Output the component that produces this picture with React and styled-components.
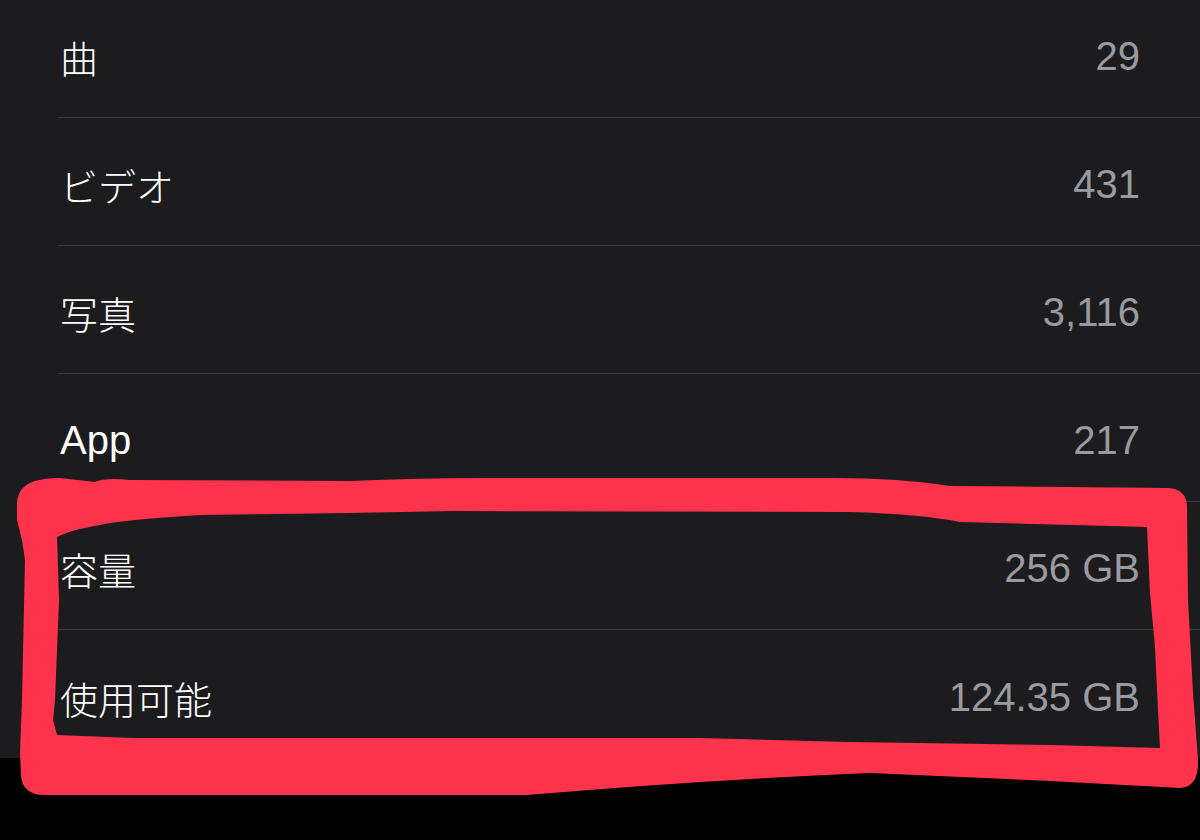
import React from "react";
import styled, { createGlobalStyle } from "styled-components";

/* iOS "About" style list with a hand-drawn red marker over the storage rows. */

const GlobalStyle = createGlobalStyle`
  html, body {
    margin: 0;
    padding: 0;
    background: #000;
  }
  body {
    font-family: "Liberation Sans", "Noto Sans CJK JP", sans-serif;
    -webkit-font-smoothing: antialiased;
  }
`;

const Page = styled.div`
  position: relative;
  width: 1200px;
  height: 840px;
  overflow: hidden;
  background: #000;
`;

const List = styled.div`
  margin-top: -10px;
  background: #1c1c1e;
`;

const Row = styled.div`
  box-sizing: border-box;
  height: 128px;
  margin-left: 58px;
  padding: 6px 60px 0 2px;
  display: flex;
  align-items: center;
  justify-content: space-between;
  border-bottom: ${({ $last }) => ($last ? "none" : "1px solid #38383a")};
`;

const Label = styled.span`
  font-family: ${({ $cjk }) =>
    $cjk ? '"Noto Sans CJK JP", sans-serif' : '"Liberation Sans", sans-serif'};
  font-size: ${({ $cjk }) => ($cjk ? "38px" : "40px")};
  font-weight: ${({ $cjk }) => ($cjk ? 300 : 400)};
  color: #ffffff;
`;

const Value = styled.span`
  font-size: 40px;
  color: #9a9aa0;
`;

const Marker = styled.svg`
  position: absolute;
  inset: 0;
  width: 1200px;
  height: 840px;
  pointer-events: none;
`;

const OUTER =
  "M17 520 L17 503 Q18 486 35 481 Q45 478 60 478 L95 482 Q105 477 130 480 L350 481 " +
  "Q420 478 483 478 L833 478 Q900 478 950 486 L1168 488 Q1186 489 1187 506 L1188 600 " +
  "L1193 693 L1198 760 Q1199 787 1180 788 L1050 781 L870 773 Q700 780 527 795 L45 795 " +
  "Q22 795 21 775 L20 753 L22 700 L25 560 L22 540 Z";

const INNER =
  "M57 537 Q70 530 100 525 Q120 520 200 515 L350 513 L453 511 L850 512 Q920 514 960 522 " +
  "L1147 527 L1150 593 L1155 647 L1158 710 L1160 748 L1050 745 L850 742 L700 738 L133 738 " +
  "L57 735 L53 720 L55 700 L59 600 Z";

const DATA = [
  { label: "曲", value: "29" },
  { label: "ビデオ", value: "431" },
  { label: "写真", value: "3,116" },
  { label: "App", value: "217" },
  { label: "容量", value: "256 GB" },
  { label: "使用可能", value: "124.35 GB" },
];

const isCjk = (text) => /[\u3040-\u30ff\u4e00-\u9fff]/.test(text);

const App = () => (
  <Page>
    <GlobalStyle />
    <List>
      {DATA.map(({ label, value }, i) => (
        <Row key={label} $last={i === DATA.length - 1}>
          <Label $cjk={isCjk(label)}>{label}</Label>
          <Value>{value}</Value>
        </Row>
      ))}
    </List>
    <Marker viewBox="0 0 1200 840">
      <path d={`${OUTER} ${INNER}`} fill="#ff334b" fillRule="evenodd" />
    </Marker>
  </Page>
);

export default App;
